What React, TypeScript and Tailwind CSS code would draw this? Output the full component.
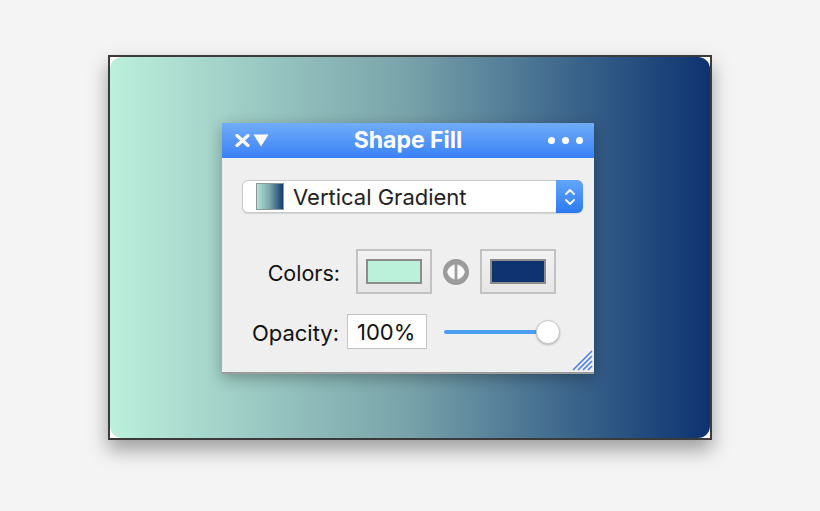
import React from 'react';

const font = { fontFamily: 'Inter, "Liberation Sans", sans-serif' };

function SwatchWell({ color }: { color: string }) {
  return (
    <div className="w-[76px] h-[45px] border-2 border-[#c2c2c2] bg-gradient-to-b from-[#f2f2f2] to-[#e6e6e6] p-[8px]">
      <div className={`w-full h-full border-2 border-[#8c8c8c] ${color}`} />
    </div>
  );
}

function SwapIcon() {
  return (
    <svg width="28" height="28" viewBox="0 0 28 28">
      <circle cx="14" cy="14" r="13" fill="#9b9b9b" />
      <path d="M12.6 6.5 L12.6 21.5 C9 20.5 6 17.5 5.2 14 C6 10.5 9 7.5 12.6 6.5 Z" fill="#fff" />
      <path d="M15.4 6.5 L15.4 21.5 C19 20.5 22 17.5 22.8 14 C22 10.5 19 7.5 15.4 6.5 Z" fill="#fff" />
    </svg>
  );
}

function ResizeGrip() {
  return (
    <svg width="21" height="21" viewBox="0 0 21 21" className="absolute right-[1px] bottom-[1px]">
      <g stroke="#4a7ee8" strokeWidth="1.6">
        <line x1="1" y1="20" x2="20" y2="1" />
        <line x1="6" y1="20" x2="20" y2="6" />
        <line x1="11" y1="20" x2="20" y2="11" />
        <line x1="16" y1="20" x2="20" y2="16" />
      </g>
    </svg>
  );
}

export default function App() {
  return (
    <div className="w-[820px] h-[511px] bg-[#f4f4f4] pt-[55px] pl-[108px]" style={font}>
      <div className="w-[604px] h-[385px] border-2 border-[#3b3b3b] bg-white shadow-[0_10px_18px_rgba(0,0,0,0.35)]">
        <div className="h-full rounded-[12px] bg-gradient-to-r from-[#bdf0dc] via-[#78a2a9] to-[#0e3270] pt-[66px] pl-[112px]">
          <div className="w-[372px] shadow-[0_4px_14px_rgba(0,0,0,0.3)]">
            {/* title bar */}
            <div className="relative h-[35px] flex items-center justify-center bg-gradient-to-b from-[#70acf7] to-[#3a81f6]">
              <div className="absolute left-[13px] top-[11px] flex items-center gap-[3px]">
                <svg width="15" height="13" viewBox="0 0 15 13">
                  <path d="M2 1.5 L13 11.5 M13 1.5 L2 11.5" stroke="#fff" strokeWidth="3.2" strokeLinecap="round" />
                </svg>
                <svg width="16" height="13" viewBox="0 0 16 13">
                  <path d="M0.5 0.5 L15.5 0.5 L8 12.5 Z" fill="#fff" />
                </svg>
              </div>
              <span className="text-white font-bold text-[23px] leading-none">Shape Fill</span>
              <div className="absolute right-[11px] top-[14px] flex gap-[7px]">
                <span className="w-[7px] h-[7px] rounded-full bg-white" />
                <span className="w-[7px] h-[7px] rounded-full bg-white" />
                <span className="w-[7px] h-[7px] rounded-full bg-white" />
              </div>
            </div>

            {/* body */}
            <div className="relative h-[216px] bg-[#efefef] border-b-2 border-[#9c9c9c] pt-[22px]">
              <div className="ml-[20px] w-[341px] h-[33px] flex rounded-[6px] bg-white border border-[#c9c9c9] shadow-[0_1px_1px_rgba(0,0,0,0.12)]">
                <div className="flex-1 flex items-center pl-[13px]">
                  <div className="w-[28px] h-[27px] border border-[#8a9a9a] bg-gradient-to-r from-[#b4e4d6] via-[#7aa2a8] to-[#173a72]" />
                  <span className="ml-[9px] pt-[2px] text-[22px] text-[#222]">Vertical Gradient</span>
                </div>
                <div className="w-[27px] -my-px -mr-px rounded-r-[6px] bg-gradient-to-b from-[#63a6fa] to-[#2a79ef] flex items-center justify-center">
                  <svg width="12" height="20" viewBox="0 0 12 20">
                    <path d="M2 7 L6 3 L10 7 M2 13 L6 17 L10 13" stroke="#fff" strokeWidth="1.8" fill="none" strokeLinecap="round" strokeLinejoin="round" />
                  </svg>
                </div>
              </div>

              <div className="mt-[36px] flex items-center h-[45px]">
                <div className="w-[118px] pt-[3px] text-right text-[21.5px] text-[#111]">Colors:</div>
                <div className="ml-[16px]">
                  <SwatchWell color="bg-[#bbf0da]" />
                </div>
                <div className="ml-[10px]">
                  <SwapIcon />
                </div>
                <div className="ml-[10px]">
                  <SwatchWell color="bg-[#0f3370]" />
                </div>
              </div>

              <div className="mt-[20px] flex items-center h-[35px]">
                <div className="w-[117px] pt-[3px] text-right text-[22px] text-[#111]">Opacity:</div>
                <div className="ml-[8px] w-[80px] h-[35px] bg-white border border-[#c4c4c4] flex items-center pl-[9px] pt-[2px] text-[22px] text-[#111]">
                  100%
                </div>
                <div className="ml-[17px] relative w-[116px] h-[24px] flex items-center">
                  <div className="w-[100px] h-[4px] rounded-full bg-[#4a9ef2]" />
                  <div className="absolute right-0 top-0 w-[24px] h-[24px] rounded-full bg-white border border-[#c8c8c8] shadow-[0_1px_2px_rgba(0,0,0,0.25)]" />
                </div>
              </div>

              <ResizeGrip />
            </div>
          </div>
        </div>
      </div>
    </div>
  );
}
